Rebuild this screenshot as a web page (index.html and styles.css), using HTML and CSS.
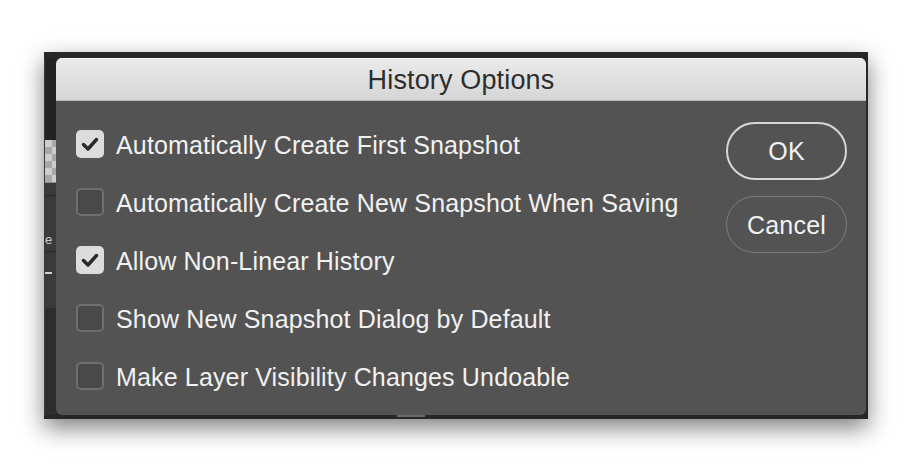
FILE: index.html
```html
<!DOCTYPE html>
<html>
<head>
<meta charset="utf-8">
<title>History Options</title>
<link rel="stylesheet" href="styles.css">
</head>
<body>
<div class="frame">
  <div class="topbar"></div>
  <div class="mid">
    <div class="strip">
      <div class="strip-dark"></div>
      <div class="strip-checker"></div>
      <div class="strip-panel">
        <div class="strip-line l1"></div>
        <div class="strip-text">e</div>
        <div class="strip-line l2"></div>
        <div class="strip-dash"></div>
      </div>
      <div class="strip-bottom"></div>
    </div>
    <div class="dialog">
      <div class="titlebar">History Options</div>
      <div class="content">
        <div class="options">
          <label class="option">
            <span class="box checked"><svg viewBox="0 0 28 28" width="28" height="28"><polyline points="7.5,14.5 12,19 20.5,9.5" fill="none" stroke="#2a2a2a" stroke-width="3.4" stroke-linecap="round" stroke-linejoin="round"/></svg></span>
            <span class="label">Automatically Create First Snapshot</span>
          </label>
          <label class="option">
            <span class="box"></span>
            <span class="label">Automatically Create New Snapshot When Saving</span>
          </label>
          <label class="option">
            <span class="box checked"><svg viewBox="0 0 28 28" width="28" height="28"><polyline points="7.5,14.5 12,19 20.5,9.5" fill="none" stroke="#2a2a2a" stroke-width="3.4" stroke-linecap="round" stroke-linejoin="round"/></svg></span>
            <span class="label">Allow Non-Linear History</span>
          </label>
          <label class="option">
            <span class="box"></span>
            <span class="label">Show New Snapshot Dialog by Default</span>
          </label>
          <label class="option">
            <span class="box"></span>
            <span class="label">Make Layer Visibility Changes Undoable</span>
          </label>
        </div>
        <div class="buttons">
          <button class="btn primary">OK</button>
          <button class="btn secondary">Cancel</button>
        </div>
      </div>
    </div>
    <div class="rightedge"></div>
  </div>
  <div class="bottombar">
    <div class="bb-spacer"></div>
    <div class="bb-light"></div>
  </div>
</div>
</body>
</html>
```

FILE: styles.css
```css
html, body {
  margin: 0;
  padding: 0;
  background: #ffffff;
}

body {
  width: 912px;
  height: 472px;
  overflow: hidden;
  font-family: "Liberation Sans", Arial, sans-serif;
}

.frame {
  margin: 52px 0 0 44px;
  width: 824px;
  height: 367px;
  background: #272727;
  display: flex;
  flex-direction: column;
  box-shadow: 0 9px 22px rgba(0, 0, 0, 0.5);
}

.topbar {
  height: 6px;
  flex: none;
}

.mid {
  display: flex;
  height: 357px;
  flex: none;
}

.strip {
  width: 12px;
  flex: none;
  display: flex;
  flex-direction: column;
  border-left: 1px solid #3a3a3a;
  box-sizing: border-box;
}

.strip-dark {
  height: 82px;
  background: #232323;
}

.strip-checker {
  height: 42px;
  background-color: #c9c9c9;
  background-image: repeating-conic-gradient(#a9a9a9 0 25%, #cdcdcd 0 50%);
  background-size: 14px 14px;
  border-bottom: 1px solid #8a8a8a;
}

.strip-panel {
  height: 125px;
  background: #3a3a3a;
  display: flex;
  flex-direction: column;
}

.strip-line {
  height: 1px;
  background: #262626;
}

.l1 {
  margin-top: 12px;
}

.strip-text {
  margin-top: 36px;
  height: 16px;
  font-size: 13px;
  line-height: 16px;
  color: #cfcfcf;
  overflow: hidden;
}

.l2 {
  margin-top: 3px;
}

.strip-dash {
  margin-top: 20px;
  width: 7px;
  height: 2px;
  background: #cfcfcf;
}

.strip-bottom {
  flex: 1;
  background: #2d2d2d;
}

.dialog {
  width: 810px;
  flex: none;
  background: #535353;
  border-radius: 6px;
  overflow: hidden;
  display: flex;
  flex-direction: column;
}

.rightedge {
  width: 2px;
  flex: none;
}

.titlebar {
  height: 42px;
  flex: none;
  border-bottom: 1px solid #b9b9b9;
  background: linear-gradient(#ebebeb, #d5d5d5);
  box-shadow: inset 0 1px 0 #f5f5f5;
  color: #2d2d2d;
  font-size: 27px;
  line-height: 44px;
  text-align: center;
  letter-spacing: 0.15px;
}

.content {
  flex: 1;
  display: flex;
  justify-content: space-between;
  padding: 21px 19px 0 20px;
}

.options {
  display: flex;
  flex-direction: column;
  gap: 30px;
  padding-top: 8px;
}

.option {
  display: flex;
  align-items: center;
  gap: 12px;
  height: 28px;
}

.box {
  width: 28px;
  height: 28px;
  box-sizing: border-box;
  border: 2px solid #6f6f6f;
  background: #494949;
  border-radius: 5px;
  flex: none;
  display: flex;
}

.box.checked {
  border: none;
  background: #dcdcdc;
}

.label {
  color: #f1f1f1;
  font-size: 25px;
  line-height: 28px;
  padding-top: 2px;
  white-space: nowrap;
  letter-spacing: 0.15px;
}

.buttons {
  display: flex;
  flex-direction: column;
  gap: 16px;
}

.btn {
  width: 121px;
  box-sizing: border-box;
  background: transparent;
  color: #f1f1f1;
  font-family: "Liberation Sans", Arial, sans-serif;
  font-size: 25px;
  padding: 0;
  border-radius: 30px;
  letter-spacing: 0.2px;
}

.primary {
  height: 58px;
  border: 2px solid #d6d6d6;
}

.secondary {
  height: 57px;
  border: 1.5px solid #7c7c7c;
  padding-top: 2px;
}

.bottombar {
  height: 4px;
  flex: none;
  display: flex;
}

.bb-spacer {
  width: 353px;
}

.bb-light {
  width: 28px;
  height: 2px;
  background: #6a6a6a;
}
```
